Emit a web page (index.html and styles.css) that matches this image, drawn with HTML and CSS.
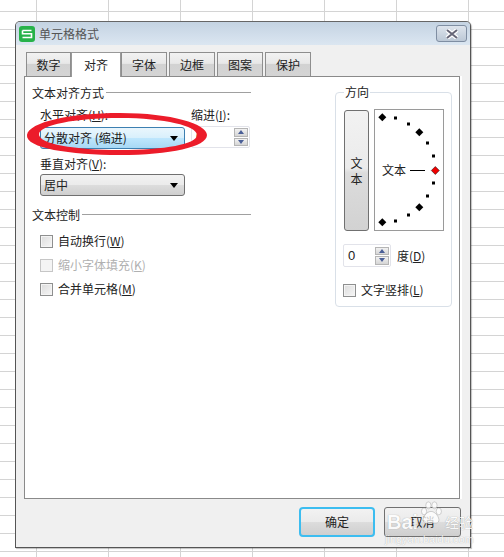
FILE: index.html
```html
<!DOCTYPE html>
<html lang="zh-CN">
<head>
<meta charset="utf-8">
<title>单元格格式</title>
<link rel="stylesheet" href="styles.css">
</head>
<body>
<section class="dialog">
  <header class="titlebar">
    <span class="app-icon"><svg viewBox="0 0 16 16" width="16" height="16"><rect width="16" height="16" rx="3" fill="#27b24a"/><path d="M3.500 4.500H12.500M3.500 4.500V7.800H12.500V11.500H3.500" fill="none" stroke="#fff" stroke-width="1.600"/></svg></span>
    <span class="title">单元格格式</span>
    <button class="close"><svg viewBox="0 0 14 10" width="14" height="10"><path d="M2 1L12 9M12 1L2 9" stroke="#fff" stroke-width="4.400"/><path d="M2 1L12 9M12 1L2 9" stroke="#667" stroke-width="2"/></svg></button>
  </header>
  <nav class="tabs">
    <span class="tab first">数字</span>
    <span class="tab active">对齐</span>
    <span class="tab">字体</span>
    <span class="tab">边框</span>
    <span class="tab">图案</span>
    <span class="tab">保护</span>
  </nav>
  <main class="panel">
    <div class="left">
      <div class="group-title"><span>文本对齐方式</span><i></i></div>
      <div class="align-grid">
        <div>
          <label class="field-label">水平对齐(<u>H</u>):</label>
          <div class="select focused"><span>分散对齐 (缩进)</span><b></b></div>
          <label class="field-label second">垂直对齐(<u>V</u>):</label>
          <div class="select"><span>居中</span><b></b></div>
        </div>
        <div class="indent">
          <label class="field-label">缩进(<u>I</u>):</label>
          <div class="spin wide"><span>0</span><div class="arrows"><em class="up"></em><em class="down"></em></div></div>
        </div>
      </div>
      <div class="group-title control"><span>文本控制</span><i></i></div>
      <div class="checks">
        <div class="check"><s></s>自动换行(<u>W</u>)</div>
        <div class="check disabled"><s></s>缩小字体填充(<u>K</u>)</div>
        <div class="check"><s></s>合并单元格(<u>M</u>)</div>
      </div>
    </div>
    <fieldset class="direction">
      <legend>方向</legend>
      <div class="orient">
        <button class="vertical"><span>文</span><span>本</span></button>
        <div class="dial">
          <svg viewBox="0 0 68 120" width="68" height="120">
            <g fill="#000">
              <path d="M7.300 3.300l4 4-4 4-4-4z"/>
              <path d="M44.300 18.300l4 4-4 4-4-4z"/>
              <path d="M44.300 93.300l4 4-4 4-4-4z"/>
              <path d="M7.300 108.300l4 4-4 4-4-4z"/>
              <rect x="19" y="6.500" width="3" height="3"/>
              <rect x="32" y="12.500" width="3" height="3"/>
              <rect x="51" y="31.500" width="3" height="3"/>
              <rect x="57" y="44.500" width="3" height="3"/>
              <rect x="57" y="71.500" width="3" height="3"/>
              <rect x="51" y="84.500" width="3" height="3"/>
              <rect x="32" y="103.500" width="3" height="3"/>
              <rect x="19" y="109.500" width="3" height="3"/>
              <rect x="35" y="60" width="15" height="1"/>
            </g>
            <path d="M60.300 56.500l4 4-4 4-4-4z" fill="#f00000" stroke="#000" stroke-width=".5"/>
            <text x="7" y="65" class="dial-text">文本</text>
          </svg>
        </div>
      </div>
      <div class="degree">
        <div class="spin narrow"><span>0</span><div class="arrows"><em class="up"></em><em class="down"></em></div></div>
        <span class="degree-label">度(<u>D</u>)</span>
      </div>
      <div class="check vert"><s></s>文字竖排(<u>L</u>)</div>
    </fieldset>
  </main>
  <footer class="actions">
    <button class="btn primary">确定</button>
    <button class="btn cancel">取消</button>
  </footer>
</section>

<svg class="mark" viewBox="0 0 504 557" width="504" height="557" aria-hidden="true">
  <path fill-rule="evenodd" fill="#ec1c2a" d="M27 135C29 122 70 113 120 113C172 113 207 124 207 135C207 147 170 155 120 155C70 155 25 148 27 135ZM39 134C40 125 75 118 120 118C165 118 197 126 197 135C197 144 165 150 120 150C75 150 38 144 39 134Z"/>
</svg>
<div class="watermark">
  <svg viewBox="0 0 30 30" width="26" height="26"><g fill="#fff" fill-opacity=".75" stroke="#999" stroke-opacity=".5"><ellipse cx="7" cy="12" rx="3" ry="4"/><ellipse cx="12" cy="5" rx="3" ry="4"/><ellipse cx="19" cy="5" rx="3" ry="4"/><ellipse cx="24" cy="12" rx="3" ry="4"/><path d="M15 12c5 0 10 7 9 11s-6 2-9 2-8 2-9-2 4-11 9-11z"/></g></svg>
  <span class="wm-a">Bai</span><span class="wm-b">经验</span>
  <span class="wm-c">jingyan.baidu.com</span>
</div>
</body>
</html>
```
FILE: styles.css
```css
* { box-sizing: border-box; }
html, body { height: 100%; }
body {
  margin: 0;
  padding: 21px 0 0 15px;
  overflow: hidden;
  font: 12px/16px "Noto Sans CJK SC", "Liberation Sans", sans-serif;
  color: #222;
  background-color: #fff;
  background-image:
    linear-gradient(#d4d4d4 1px, transparent 1px),
    linear-gradient(90deg, #d4d4d4 1px, transparent 1px);
  background-size: 72px 18px;
  background-position: 36px 11px;
}
button { font: inherit; color: inherit; padding: 0; }
u { text-decoration: underline; }

.dialog {
  width: 456px;
  height: 527px;
  background: #f0f0f0;
  border: 1px solid #555;
  border-top-color: #666;
  border-radius: 5px 5px 0 0;
  box-shadow: 1px 1px 1px rgba(0,0,0,.25);
}
.titlebar {
  height: 23px;
  display: flex;
  align-items: center;
  padding: 0 3px 0 3px;
  background: linear-gradient(#c4d3e2, #dbe6f1);
  border-radius: 4px 4px 0 0;
}
.app-icon { display: flex; width: 16px; height: 16px; }
.title { margin-left: 4px; color: #555; font-size: 12px; }
.close {
  margin-left: auto;
  width: 31px;
  height: 17px;
  display: flex;
  align-items: center;
  justify-content: center;
  background: linear-gradient(#dde4ec, #bcc8d6);
  border: 1px solid #7f8ea2;
  border-radius: 3px;
}

.tabs {
  display: flex;
  align-items: flex-end;
  height: 31px;
  margin-left: 10px;
  position: relative;
  z-index: 1;
}
.tab {
  width: 46px;
  height: 24px;
  margin-right: 2px;
  display: flex;
  align-items: center;
  justify-content: center;
  background: linear-gradient(#f2f2f2 0, #e8e8e8 45%, #d2d2d2 50%, #d4d4d4 100%);
  border: 1px solid #8e8e8e;
  border-bottom: 0;
  color: #222;
}
.first { width: 45px; margin-right: 0; }
.active {
  width: 50px;
  height: 25px;
  margin: 0 0 -1px 0;
  background: #fff;
  border-color: #999;
}

.panel {
  width: 436px;
  height: 423px;
  margin-left: 8px;
  background: #fff;
  border: 1px solid #8a8a8a;
  display: flex;
  padding: 8px 0 0 7px;
  box-shadow: 2px 0 0 #fff;
}
.left { width: 219px; margin-right: 84px; }
.group-title { display: flex; align-items: center; height: 16px; color: #222; }
.group-title i { flex: 1; height: 1px; background: #a0a0a0; margin-left: 2px; margin-top: -2px; }
.control { margin-top: 11px; }

.align-grid { display: flex; margin-left: 8px; margin-top: 6px; }
.field-label { display: block; height: 16px; color: #222; }
.second { margin-top: 7px; margin-bottom: -2px; }
.indent { margin-left: 6px; }
.select {
  width: 145px;
  height: 22px;
  margin-top: 4px;
  display: flex;
  align-items: center;
  justify-content: space-between;
  padding: 0 6px 0 3px;
  border: 1px solid #707070;
  border-radius: 3px;
  background: linear-gradient(#f2f2f2 0, #ebebeb 48%, #dcdcdc 52%, #cfcfcf 100%);
  color: #222;
}
.select b { width: 0; height: 0; border: 4px solid transparent; border-top: 5px solid #000; border-bottom: 0; }
.focused {
  border-color: #3c7fb1;
  background: linear-gradient(#eaf6fd 0, #d9f0fc 48%, #bee6fd 52%, #a7d9f5 100%);
}

.spin {
  height: 22px;
  display: flex;
  align-items: center;
  justify-content: space-between;
  padding: 0 1px 0 4px;
  background: #fff;
  border: 1px solid #e2e3ea;
  border-radius: 2px;
  font-family: "Liberation Sans", sans-serif;
  font-size: 13px;
}
.wide { width: 59px; margin-top: 3px; }
.narrow { width: 48px; height: 23px; margin-left: -1px; }
.arrows { width: 14px; height: 18px; display: flex; flex-direction: column; gap: 1px; }
.arrows em {
  flex: 1;
  display: flex;
  align-items: center;
  justify-content: center;
  background: linear-gradient(#f2f2f2, #d5d5d5);
  border: 1px solid #b5b5b5;
}
.arrows em::after {
  content: "";
  width: 0;
  height: 0;
  border: 3px solid transparent;
}
.up::after { border-bottom: 4px solid #4a5f97 !important; border-top: 0 !important; }
.down::after { border-top: 4px solid #4a5f97 !important; border-bottom: 0 !important; }

.checks { margin: 10px 0 0 8px; display: flex; flex-direction: column; gap: 8px; }
.check { display: flex; align-items: center; height: 16px; color: #222; }
.check s {
  width: 13px;
  height: 13px;
  margin-right: 5px;
  border: 1px solid #8e8f8f;
  background: linear-gradient(135deg, #dcdcdc, #f6f6f6);
  box-shadow: inset 0 0 0 1px #f4f4f4;
}
.disabled { color: #b0b0b0; }
.disabled s { border-color: #c6c6c6; background: #f4f4f4; box-shadow: none; }

.direction {
  width: 117px;
  height: 222px;
  margin: 0;
  padding: 10px 0 0 8px;
  border: 1px solid #d9e0e8;
  border-radius: 4px;
}
.direction legend { padding: 0 1px; line-height: 14px; height: 14px; }
.orient { display: flex; gap: 5px; }
.vertical {
  width: 25px;
  height: 121px;
  margin-top: 1px;
  display: flex;
  flex-direction: column;
  align-items: center;
  justify-content: center;
  border: 1px solid #707070;
  border-radius: 3px;
  background: linear-gradient(#f2f2f2 0, #ebebeb 48%, #dcdcdc 52%, #d2d2d2 100%);
}
.dial { width: 70px; height: 122px; border: 1px solid #9a9a9a; background: #fff; }
.dial svg { display: block; }
.dial-text { font-size: 12px; fill: #222; font-family: "Noto Sans CJK SC", sans-serif; }

.degree { display: flex; align-items: center; gap: 6px; margin-top: 13px; }
.vert { margin: 15px 0 0 -1px; }

.actions {
  display: flex;
  justify-content: flex-end;
  gap: 9px;
  margin-top: 8px;
  padding-right: 9px;
}
.btn {
  width: 76px;
  height: 30px;
  background: linear-gradient(#f2f2f2 0, #ebebeb 48%, #dcdcdc 52%, #cfcfcf 100%);
  border: 1px solid #707070;
  border-radius: 3px;
}
.cancel { width: 77px; }
.primary { border: 2px solid #3cbdf0; border-radius: 4px; }

.mark { position: absolute; left: 0; top: 0; pointer-events: none; }
.watermark {
  position: absolute;
  left: 384px;
  top: 497px;
  width: 120px;
  height: 50px;
  color: #fff;
  text-shadow: 0 0 1px #888;
  pointer-events: none;
}
.watermark svg { position: absolute; left: 34px; top: 4px; }
.wm-a { position: absolute; left: 3px; top: 12px; font: bold 20px/26px "Liberation Sans", sans-serif; opacity: .85; }
.wm-b { position: absolute; left: 61px; top: 15px; font-size: 14px; line-height: 20px; opacity: .85; }
.wm-c { position: absolute; left: 1px; top: 35px; font-size: 11px; line-height: 14px; opacity: .75; font-family: "Liberation Sans", sans-serif; }
```
